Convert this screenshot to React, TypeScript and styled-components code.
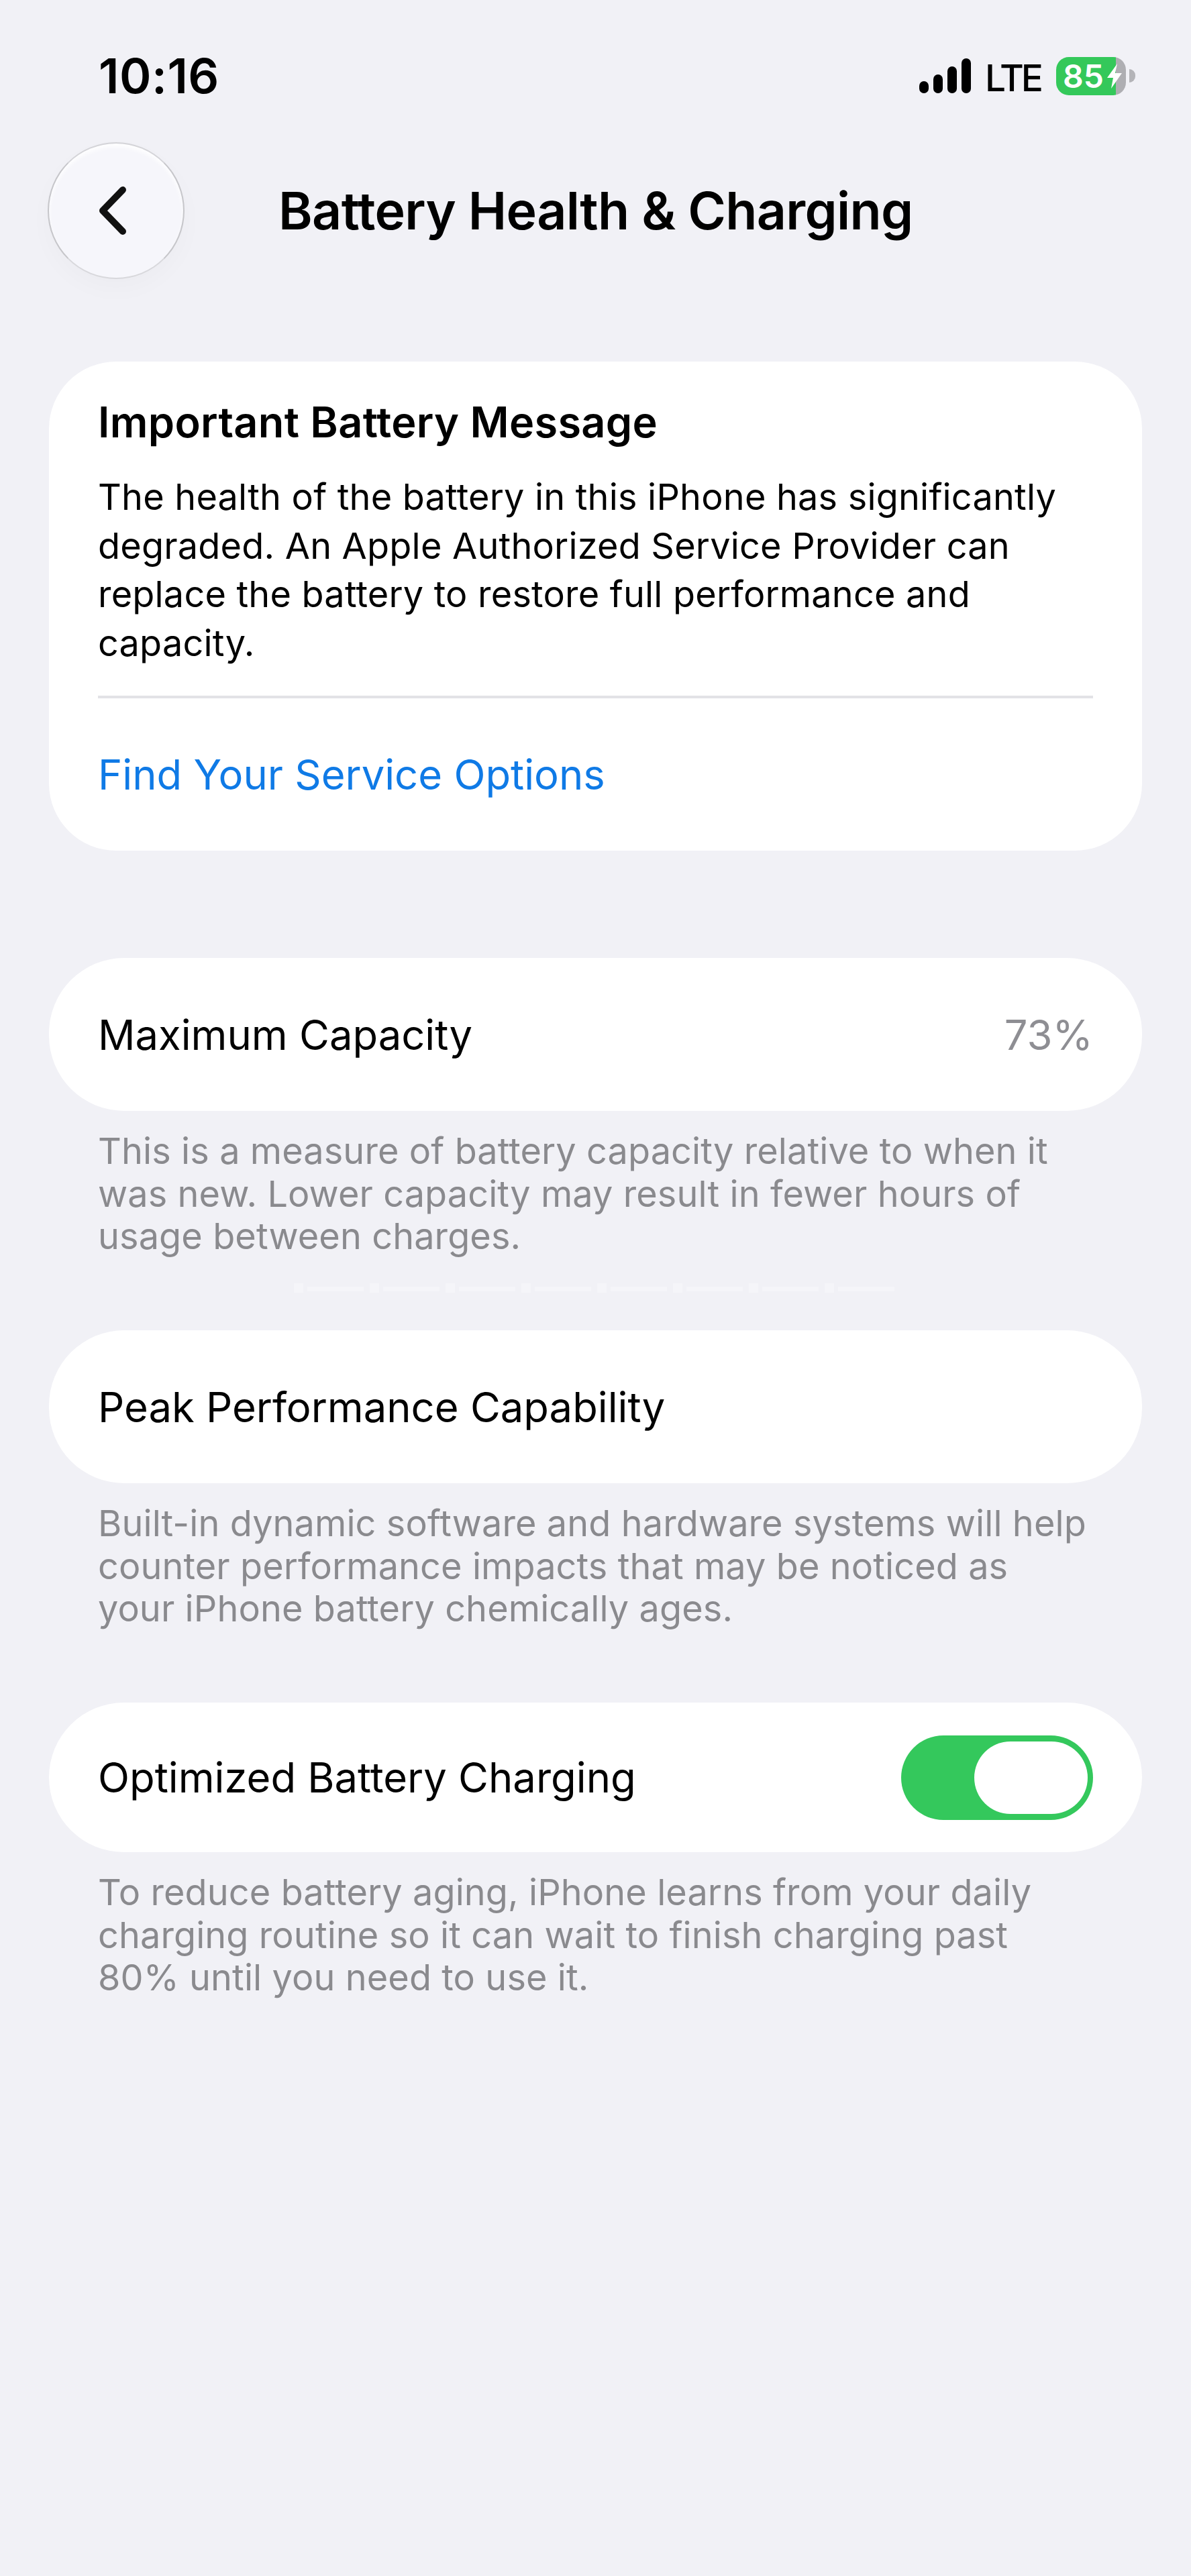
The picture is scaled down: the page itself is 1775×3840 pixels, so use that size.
import React from 'react';
import styled, { createGlobalStyle } from 'styled-components';

const GlobalStyle = createGlobalStyle`
  html, body {
    margin: 0;
    padding: 0;
    background: #f1f1f6;
  }
  body {
    font-family: Inter, "Liberation Sans", sans-serif;
    color: #000;
  }
`;

const Page = styled.div`
  position: relative;
  width: 1775px;
  height: 3840px;
  background: #f1f1f6;
  overflow: hidden;
`;

const StatusBar = styled.div`
  display: flex;
  align-items: center;
  justify-content: space-between;
  height: 64px;
  padding: 81px 83px 0 147px;
`;

const Time = styled.div`
  font-size: 72px;
  font-weight: 600;
  letter-spacing: 0.5px;
  line-height: 64px;
`;

const StatusIcons = styled.div`
  display: flex;
  align-items: center;
  gap: 21px;
`;

const Lte = styled.span`
  font-size: 55px;
  font-weight: 500;
  letter-spacing: -4px;
  line-height: 64px;
  margin-top: 5px;
  margin-right: 2px;
`;

const Battery = styled.div`
  display: flex;
  align-items: center;
  gap: 5px;
`;

const BatteryBody = styled.div`
  width: 104px;
  height: 57px;
  border-radius: 19px;
  background: linear-gradient(90deg, #34c85a 0 85.5%, #aeaeb2 85.5% 100%);
  display: flex;
  align-items: center;
  gap: 5px;
  padding-left: 10px;
  box-sizing: border-box;
  color: #fff;
  font-size: 48px;
  font-weight: 600;
`;

const BatteryCap = styled.div`
  width: 9px;
  height: 20px;
  border-radius: 0 10px 10px 0;
  background: #b4b4b8;
`;

const NavBar = styled.div`
  display: flex;
  align-items: center;
  height: 204px;
  margin-top: 67px;
  padding-left: 71px;
`;

const BackButton = styled.div`
  width: 204px;
  height: 204px;
  box-sizing: border-box;
  border-radius: 50%;
  border: 2px solid #c6c6ca;
  border-top-color: #d4d4d8;
  border-bottom-color: #d8d8dc;
  background: #f6f6fb;
  box-shadow: 0 14px 36px rgba(0, 0, 0, 0.025), inset 0 5px 6px rgba(255, 255, 255, 0.9);
  display: flex;
  align-items: center;
  justify-content: center;
  padding-right: 10px;
`;

const Title = styled.h1`
  margin: 0 0 0 140px;
  font-size: 77px;
  font-weight: 600;
  letter-spacing: -0.67px;
  line-height: 96px;
`;

const Content = styled.div`
  padding: 0 73px;
`;

const Card = styled.section`
  background: #fff;
  border-radius: 100px;
  padding: 52px 73px 0;
  height: 729px;
  box-sizing: border-box;
  margin-top: 123px;
  margin-bottom: 160px;
`;

const CardHeading = styled.h2`
  margin: 0;
  font-size: 63px;
  font-weight: 600;
  letter-spacing: 0.3px;
  line-height: 76px;
`;

const CardBody = styled.p`
  margin: 38px 0 0;
  font-size: 54px;
  letter-spacing: 0.2px;
  line-height: 72.6px;
`;

const Divider = styled.div`
  height: 4px;
  background: #e2e2e6;
  margin-top: 42px;
`;

const CardLink = styled.div`
  font-size: 61.5px;
  line-height: 72px;
  color: #0f7ae6;
  margin-top: 78px;
`;

const Row = styled.div<{ $height?: number }>`
  display: flex;
  align-items: center;
  justify-content: space-between;
  background: #fff;
  border-radius: 112px;
  height: ${(p) => p.$height ?? 228}px;
  padding: 0 73px;
`;

const RowLabel = styled.span`
  font-size: 61.5px;
`;

const RowValue = styled.span`
  font-size: 61.5px;
  color: #8e8e93;
`;

const Footnote = styled.p`
  margin: 28px 0 0 73px;
  width: 1475px;
  height: 299px;
  font-size: 54px;
  letter-spacing: 0.1px;
  line-height: 63.5px;
  color: #8a8a8e;
`;

const Toggle = styled.div`
  width: 286px;
  height: 126px;
  box-sizing: border-box;
  border-radius: 63px;
  background: #34c85c;
  display: flex;
  justify-content: flex-end;
  padding: 9px 8px;
`;

const Knob = styled.div`
  width: 169px;
  height: 108px;
  border-radius: 54px;
  background: #fff;
`;

/* faint illegible strip that sits over the gap below the first footnote */
const Watermark = styled.div`
  position: absolute;
  left: 438px;
  top: 1913px;
  display: flex;
  gap: 9px;
`;

const WatermarkItem = styled.div`
  display: flex;
  align-items: flex-end;
  gap: 6px;
  width: 104px;

  &::before {
    content: '';
    width: 14px;
    height: 14px;
    background: rgba(255, 255, 255, 0.3);
  }

  &::after {
    content: '';
    width: 84px;
    height: 7px;
    margin-bottom: 2px;
    background: rgba(255, 255, 255, 0.3);
  }
`;

function SignalIcon() {
  return (
    <svg width="77" height="52" viewBox="0 0 77 52">
      <rect x="0" y="34" width="14" height="18" rx="7" />
      <rect x="21" y="24" width="14" height="28" rx="7" />
      <rect x="42" y="12" width="14" height="40" rx="7" />
      <rect x="63" y="0" width="14" height="52" rx="7" />
    </svg>
  );
}

function BackIcon() {
  return (
    <svg width="40" height="72" viewBox="0 0 40 72" fill="none">
      <path d="M35 5 L5 36 L35 67" stroke="#111" strokeWidth="10" strokeLinecap="round" strokeLinejoin="round" />
    </svg>
  );
}

function BoltIcon() {
  return (
    <svg width="22" height="37" viewBox="0 0 22 37">
      <path d="M15 0 L0 21 H9 L6 37 L22 14 H12 Z" fill="#fff" />
    </svg>
  );
}

export default function App() {
  return (
    <Page>
      <GlobalStyle />
      <StatusBar>
        <Time>10:16</Time>
        <StatusIcons>
          <SignalIcon />
          <Lte>LTE</Lte>
          <Battery>
            <BatteryBody>
              85
              <BoltIcon />
            </BatteryBody>
            <BatteryCap />
          </Battery>
        </StatusIcons>
      </StatusBar>
      <NavBar>
        <BackButton>
          <BackIcon />
        </BackButton>
        <Title>Battery Health &amp; Charging</Title>
      </NavBar>
      <Content>
        <Card>
          <CardHeading>Important Battery Message</CardHeading>
          <CardBody>
            The health of the battery in this iPhone has significantly degraded. An Apple Authorized Service Provider can replace the battery to restore full performance and capacity.
          </CardBody>
          <Divider />
          <CardLink>Find Your Service Options</CardLink>
        </Card>
        <Row>
          <RowLabel>Maximum Capacity</RowLabel>
          <RowValue>73%</RowValue>
        </Row>
        <Footnote>
          This is a measure of battery capacity relative to when it was new. Lower capacity may result in fewer hours of usage between charges.
        </Footnote>
        <Row>
          <RowLabel>Peak Performance Capability</RowLabel>
        </Row>
        <Footnote>
          Built-in dynamic software and hardware systems will help counter performance impacts that may be noticed as your iPhone battery chemically ages.
        </Footnote>
        <Row $height={223}>
          <RowLabel>Optimized Battery Charging</RowLabel>
          <Toggle>
            <Knob />
          </Toggle>
        </Row>
        <Footnote>
          To reduce battery aging, iPhone learns from your daily charging routine so it can wait to finish charging past 80% until you need to use it.
        </Footnote>
      </Content>
      <Watermark>
        {Array.from({ length: 8 }).map((_, i) => (
          <WatermarkItem key={i} />
        ))}
      </Watermark>
    </Page>
  );
}
